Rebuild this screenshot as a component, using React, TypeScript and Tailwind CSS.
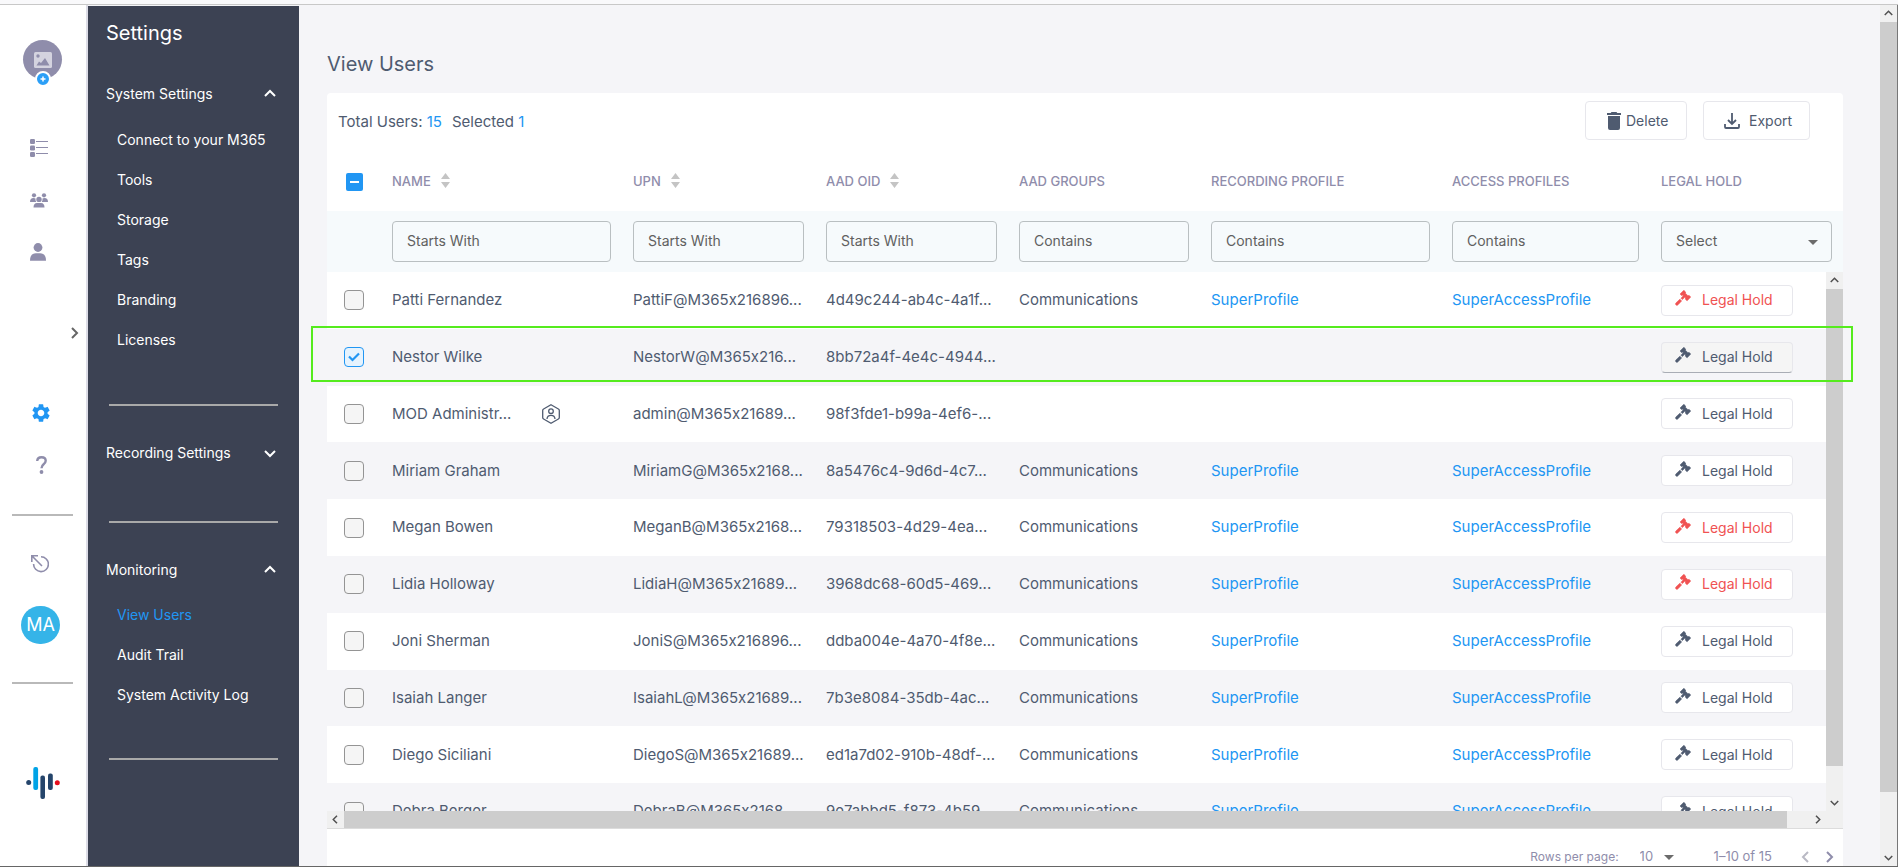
import { useState } from "react";
import { clsx } from "clsx";
import { MdSettings } from "react-icons/md";

type User = {
    name: string;
    upn: string;
    oid: string;
    group?: boolean;
    hold?: boolean;
    admin?: boolean;
};

const users: User[] = [
    { name: "Patti Fernandez", upn: "PattiF@M365x216896...", oid: "4d49c244-ab4c-4a1f...", group: true, hold: true },
    { name: "Nestor Wilke", upn: "NestorW@M365x216...", oid: "8bb72a4f-4e4c-4944..." },
    { name: "MOD Administr...", upn: "admin@M365x21689...", oid: "98f3fde1-b99a-4ef6-...", admin: true },
    { name: "Miriam Graham", upn: "MiriamG@M365x2168...", oid: "8a5476c4-9d6d-4c7...", group: true },
    { name: "Megan Bowen", upn: "MeganB@M365x2168...", oid: "79318503-4d29-4ea...", group: true, hold: true },
    { name: "Lidia Holloway", upn: "LidiaH@M365x21689...", oid: "3968dc68-60d5-469...", group: true, hold: true },
    { name: "Joni Sherman", upn: "JoniS@M365x216896...", oid: "ddba004e-4a70-4f8e...", group: true },
    { name: "Isaiah Langer", upn: "IsaiahL@M365x21689...", oid: "7b3e8084-35db-4ac...", group: true },
    { name: "Diego Siciliani", upn: "DiegoS@M365x21689...", oid: "ed1a7d02-910b-48df-...", group: true },
    { name: "Debra Berger", upn: "DebraB@M365x2168...", oid: "9e7abbd5-f873-4b59...", group: true },
];

const columns = [
    { title: "NAME", filter: "Starts With", sort: true },
    { title: "UPN", filter: "Starts With", sort: true },
    { title: "AAD OID", filter: "Starts With", sort: true },
    { title: "AAD GROUPS", filter: "Contains" },
    { title: "RECORDING PROFILE", filter: "Contains" },
    { title: "ACCESS PROFILES", filter: "Contains" },
];

const systemLinks = ["Connect to your M365", "Tools", "Storage", "Tags", "Branding", "Licenses"];
const monitoringLinks = ["View Users", "Audit Trail", "System Activity Log"];

// shared by the head table and the body table
const Cols = () => (
    <colgroup>
        <col className="w-[54px]" />
        <col className="w-[241px]" />
        <col className="w-[193px]" />
        <col className="w-[193px]" />
        <col className="w-[192px]" />
        <col className="w-[241px]" />
        <col className="w-[209px]" />
        <col className="w-[193px]" />
    </colgroup>
);

const arrows = {
    up: "M1 8 L6 3 L11 8",
    down: "M1 4 L6 9 L11 4",
    left: "M8 1 L3 6 L8 11",
    right: "M4 1 L9 6 L4 11",
};

const Arrow = ({ dir, className }: { dir: keyof typeof arrows; className?: string }) => (
    <svg className={className} viewBox="0 0 12 12" fill="none" stroke="currentColor" strokeWidth="2">
        <path d={arrows[dir]} />
    </svg>
);

const Caret = ({ className }: { className?: string }) => (
    <svg className={className} viewBox="0 0 10 5" fill="currentColor">
        <path d="M0 0h10L5 5z" />
    </svg>
);

const Sort = () => (
    <svg className="-mt-1 h-[15px] w-[9px]" viewBox="0 0 9 15" fill="#c4c4c4">
        <path d="M4.500 0 L9 6 H0Z M4.500 15 L9 9 H0Z" />
    </svg>
);

const Gavel = () => (
    <svg className="-mt-1 h-4 w-4" viewBox="0 0 16 16" fill="currentColor" stroke="currentColor" strokeWidth="0.600">
        <path d="M8.800 0.300 L10.600 2 L10.400 3.300 L12.900 5.700 L14.200 5.400 L15.700 7.100 L12.100 10.800 L10.400 9.200 L10.600 8 L9.800 7.300 L7.300 9.600 L6 8.200 L8.300 5.800 L7.600 5.200 L6.500 5.500 L5.100 4Z" />
        <path d="M4.900 9.200 L6.600 10.900 L3 14.800 Q2 15.700 1 15 Q0.200 14.200 0.900 13Z" />
    </svg>
);

const AdminBadge = () => (
    <svg className="h-5 w-[18px] shrink-0" viewBox="0 0 18 20" fill="none" stroke="#4f5b70" strokeWidth="1.300">
        <path d="M9 0.800 L16.400 5 Q17.300 5.500 17.300 6.500 V13.500 Q17.300 14.500 16.400 15 L9 19.200 L1.600 15 Q0.700 14.500 0.700 13.500 V6.500 Q0.700 5.500 1.600 5Z" />
        <circle cx="9" cy="7.200" r="2.300" />
        <path d="M5 15 Q5.200 11.300 9 11.300 Q12.800 11.300 13 15" />
    </svg>
);

const Rail = () => (
    <nav className="flex w-[88px] shrink-0 flex-col border-r-2 border-[#dcdce6] bg-white text-[#8f8dab]">
        <a href="#" aria-label="Picture" className="relative ml-[23px] mt-[35px] flex h-[39px] w-[39px] shrink-0 items-center justify-center rounded-full bg-[#8f8dab]">
            <svg className="h-4 w-[18px]" viewBox="0 0 18 16">
                <rect width="18" height="16" rx="1.500" fill="#d4d3df" />
                <circle cx="4" cy="4" r="1.700" fill="#8f8dab" />
                <path d="M2.500 13.500 L5 9.500 L7 11 L11 6 L15.500 13.500z" fill="#8f8dab" />
            </svg>
            <span className="absolute -bottom-2 left-3 flex h-4 w-4 items-center justify-center rounded-full border-2 border-white bg-[#2b9ff7]">
                <svg className="h-2 w-2" viewBox="0 0 8 8" stroke="#fff" strokeWidth="1.500">
                    <path d="M4 1.500v5M1.500 4h5" />
                </svg>
            </span>
        </a>
        <a href="#" aria-label="List" className="ml-[30px] mt-[60px]">
            <svg className="h-[18px] w-[18px]" viewBox="0 0 18 18" fill="currentColor">
                <rect width="5" height="5" rx="1.200" />
                <rect y="6.500" width="5" height="5" rx="1.200" />
                <rect y="13" width="5" height="5" rx="1.200" />
                <rect x="6" y="2" width="12" height="1" />
                <rect x="6" y="8" width="12" height="1" />
                <rect x="6" y="14" width="12" height="1" />
            </svg>
        </a>
        <a href="#" aria-label="Groups" className="ml-[30px] mt-9">
            <svg className="h-[15px] w-[18px]" viewBox="0 0 18 15" fill="currentColor">
                <circle cx="4" cy="2.300" r="2.100" />
                <circle cx="14" cy="2.300" r="2.100" />
                <circle cx="9" cy="6.400" r="2.700" />
                <path d="M0 9 Q0 5 3.500 5 Q5 5 5.500 5.600 Q5.200 7.500 6.200 9Z" />
                <path d="M18 9 Q18 5 14.500 5 Q13 5 12.500 5.600 Q12.800 7.500 11.800 9Z" />
                <path d="M3.500 14.500 Q3.500 10 7 10 H11 Q14.500 10 14.500 14.500Z" />
            </svg>
        </a>
        <a href="#" aria-label="User" className="ml-[30px] mt-[35px]">
            <svg className="h-[18px] w-4" viewBox="0 0 16 18" fill="currentColor">
                <circle cx="8" cy="4.500" r="4.400" />
                <path d="M0 17.700 Q0 10.300 6 10.300 H10 Q16 10.300 16 17.700Z" />
            </svg>
        </a>
        <button aria-label="Expand" className="ml-[68px] mt-[66px] h-3 w-3 text-[#666]">
            <Arrow dir="right" className="h-3 w-3" />
        </button>
        <a href="#" aria-label="Settings" className="ml-[30px] mt-[63px] text-[#2196f3]">
            <MdSettings className="h-[22px] w-[22px]" />
        </a>
        <a href="#" aria-label="Help" className="ml-9 mt-8">
            <svg className="h-[18px] w-[11px]" viewBox="0 0 11 18" fill="none" stroke="currentColor" strokeWidth="2.400">
                <path d="M1.200 5 Q1.400 1.200 5.500 1.200 Q9.700 1.200 9.700 4.700 Q9.700 6.600 7.600 8.200 Q5.500 9.800 5.500 12.300" />
                <circle cx="5.500" cy="16" r="1.900" fill="currentColor" stroke="none" />
            </svg>
        </a>
        <hr className="ml-3 mt-10 w-[61px] border-t-2 border-[#b9b9b9]" />
        <a href="#" aria-label="Sign out" className="ml-[31px] mt-[39px]">
            <svg className="h-[18px] w-[18px]" viewBox="0 0 18 18" fill="none" stroke="currentColor" strokeWidth="1.600">
                <path d="M7 0.800 H0.800 V7 M0.800 0.800 L11 11" />
                <path d="M10 1.800 A7.400 7.400 0 1 1 2.600 9" />
            </svg>
        </a>
        <a href="#" className="ml-[21px] mt-[33px] flex h-[38px] w-[39px] shrink-0 items-center justify-center rounded-full bg-[#35b4e8] text-lg text-white">
            MA
        </a>
        <hr className="ml-3 mt-[38px] w-[61px] border-t-2 border-[#b9b9b9]" />
        <svg className="ml-[26px] mt-[83px] h-8 w-[34px] shrink-0" viewBox="0 0 34 32">
            <circle cx="2.700" cy="15.500" r="2.500" fill="#25456b" />
            <rect x="7.300" width="4.800" height="23" rx="2" fill="#00a3e6" />
            <rect x="14.400" y="8.500" width="4.600" height="23.500" rx="2" fill="#25456b" />
            <rect x="22" y="6.500" width="4.800" height="16.500" rx="2" fill="#25456b" />
            <circle cx="31.300" cy="15.800" r="2.500" fill="#e60f1e" />
        </svg>
    </nav>
);

const SectionTitle = ({ title, open }: { title: string; open?: boolean }) => (
    <button className="flex h-10 w-full items-center justify-between pr-[23px] text-left">
        {title}
        <Arrow dir={open ? "up" : "down"} className="h-3 w-3" />
    </button>
);

const Sidebar = () => (
    <aside className="mt-px w-[211px] shrink-0 bg-[#3c4253] pl-[18px] text-sm text-white">
        <h1 className="pb-[27px] pt-[13px] text-xl">Settings</h1>
        <SectionTitle title="System Settings" open />
        <ul className="pl-[11px] pt-[6px]">
            {systemLinks.map((link) => (
                <li key={link} className="flex h-10 items-center">
                    <a href="#">{link}</a>
                </li>
            ))}
        </ul>
        <hr className="ml-[3px] mr-[21px] mt-11 border-t-2 border-[#a9a9a9]" />
        <div className="pt-[27px]">
            <SectionTitle title="Recording Settings" />
        </div>
        <hr className="ml-[3px] mr-[21px] mt-12 border-t-2 border-[#a9a9a9]" />
        <div className="pt-[27px]">
            <SectionTitle title="Monitoring" open />
        </div>
        <ul className="pl-[11px] pt-[5px]">
            {monitoringLinks.map((link) => (
                <li key={link} className="flex h-10 items-center">
                    <a href="#" className={clsx(link === "View Users" && "text-[#2196f3]")}>{link}</a>
                </li>
            ))}
        </ul>
        <hr className="ml-[3px] mr-[21px] mt-[43px] border-t-2 border-[#a9a9a9]" />
    </aside>
);

const App = () => {
    const [selected, setSelected] = useState<number[]>([1]);
    const toggle = (i: number) => setSelected((s) => (s.includes(i) ? s.filter((n) => n !== i) : [...s, i]));

    return (
        <div className="flex h-screen flex-col overflow-hidden border-b border-[#666] bg-[#f5f5f8] font-['Inter',sans-serif] text-[15px] text-[#4f5b70] [font-feature-settings:'calt'_0]">
            <div className="h-[5px] shrink-0 border-b border-[#c8c8c8] bg-[#f9f9fb]"></div>
            <div className="flex min-h-0 flex-1 overflow-hidden">
                <Rail />
                <Sidebar />
                <main className="min-w-0 flex-1 pl-7 pr-[37px] pt-[45px]">
                    <h2 className="text-xl">View Users</h2>
                    <div className="mt-[15px] rounded-t bg-white">
                        {/* toolbar */}
                        <div className="flex h-[60px] items-start justify-between pl-[11px] pr-[33px] pt-2">
                            <p className="flex h-[42px] items-center gap-[10px]">
                                <span>Total Users: <span className="text-[#2196f3]">15</span></span>
                                <span>Selected <span className="text-[#2196f3]">1</span></span>
                            </p>
                            <div className="flex gap-4 text-sm">
                                <button className="flex h-[39px] w-[102px] items-center gap-[5px] rounded border border-[#e7e7ec] pl-[21px]">
                                    <svg className="h-[18px] w-[14px]" viewBox="0 0 14 18" fill="currentColor">
                                        <path d="M4.500 0h5l0.800 1H14v2H0V1h3.700zM1 4h12v12q0 2-2 2H3q-2 0-2-2z" />
                                    </svg>
                                    Delete
                                </button>
                                <button className="flex h-[39px] w-[107px] items-center gap-[9px] rounded border border-[#e7e7ec] pl-5">
                                    <svg className="h-4 w-4" viewBox="0 0 16 16" fill="none" stroke="currentColor" strokeWidth="1.800">
                                        <path d="M8 0v10.500M4 7l4 4 4-4M1 11v3q0 1 1 1h12q1 0 1-1v-3" />
                                    </svg>
                                    Export
                                </button>
                            </div>
                        </div>

                        {/* head and filters */}
                        <table className="w-full table-fixed">
                            <Cols />
                            <thead>
                                <tr className="h-[58px] text-left text-[13px] text-[#8f8dab]">
                                    <th className="pl-[19px]">
                                        <button aria-label="Select all" className="flex h-[18px] w-[17px] items-center justify-center rounded-xs bg-[#2196f3]">
                                            <span className="h-[2px] w-[9px] bg-white"></span>
                                        </button>
                                    </th>
                                    {columns.map((c) => (
                                        <th key={c.title} className="pl-[11px] font-medium">
                                            <span className="flex items-center gap-[10px]">
                                                {c.title}
                                                {c.sort && <Sort />}
                                            </span>
                                        </th>
                                    ))}
                                    <th className="pl-[11px] font-medium">LEGAL HOLD</th>
                                </tr>
                                <tr className="h-[61px] bg-[#f6fafc]">
                                    <td></td>
                                    {columns.map((c) => (
                                        <td key={c.title} className="px-[11px]">
                                            <input
                                                type="text"
                                                aria-label={c.title}
                                                placeholder={c.filter}
                                                className="block h-[41px] w-full rounded border border-[#b9bfc1] px-[14px] pb-[2px] text-sm placeholder:text-[#606060]"
                                            />
                                        </td>
                                    ))}
                                    <td className="px-[11px]">
                                        <div className="relative">
                                            <select aria-label="LEGAL HOLD" className="block h-[41px] w-full appearance-none rounded border border-[#b9bfc1] px-[14px] pb-[2px] text-sm text-[#606060]">
                                                <option>Select</option>
                                            </select>
                                            <Caret className="pointer-events-none absolute right-[14px] top-[19px] h-[5px] w-[10px] text-[#6b6b6b]" />
                                        </div>
                                    </td>
                                </tr>
                            </thead>
                        </table>

                        {/* rows */}
                        <div className="relative">
                            <div className="flex h-[539px]">
                                <div className="min-w-0 flex-1 overflow-hidden">
                                    <table className="h-[568px] w-[calc(100%+17px)] table-fixed">
                                        <Cols />
                                        <tbody>
                                            {users.map((u, i) => (
                                                <tr key={u.name} className="even:bg-[#f5f5f8]">
                                                    <td className="pl-[17px]">
                                                        <span className="relative block h-5 w-5">
                                                            <input
                                                                type="checkbox"
                                                                aria-label={u.name}
                                                                checked={selected.includes(i)}
                                                                onChange={() => toggle(i)}
                                                                className="block h-5 w-5 appearance-none rounded border border-[#949494] bg-[#f5f5f5] checked:border-[#2196f3] checked:bg-[#e6f3fe]"
                                                            />
                                                            {selected.includes(i) && (
                                                                <svg className="pointer-events-none absolute left-1 top-1 h-3 w-3" viewBox="0 0 12 12" fill="none" stroke="#2196f3" strokeWidth="2.200">
                                                                    <path d="M1 5.500 L4.500 9 L11 2.500" />
                                                                </svg>
                                                            )}
                                                        </span>
                                                    </td>
                                                    <td className="pl-[11px]">
                                                        <div className="flex items-center gap-3">
                                                            <span className="w-[138px]">{u.name}</span>
                                                            {u.admin && <AdminBadge />}
                                                        </div>
                                                    </td>
                                                    <td className="whitespace-nowrap pl-[11px]">{u.upn}</td>
                                                    <td className="whitespace-nowrap pl-[11px]">{u.oid}</td>
                                                    <td className="pl-[11px]">{u.group && "Communications"}</td>
                                                    <td className="pl-[11px] text-[#2196f3]">{u.group && <a href="#">SuperProfile</a>}</td>
                                                    <td className="pl-[11px] text-[#2196f3]">{u.group && <a href="#">SuperAccessProfile</a>}</td>
                                                    <td className="pl-[11px]">
                                                        <button
                                                            className={clsx(
                                                                "flex h-[31px] w-[132px] items-center gap-[11px] rounded border border-[#e7e7ec] pl-[13px] text-sm",
                                                                u.hold && "text-[#f05252]",
                                                                selected.includes(i) ? "border-b-[#a9adb5] bg-[#f5f5f5]" : "bg-white"
                                                            )}
                                                        >
                                                            <Gavel />
                                                            Legal Hold
                                                        </button>
                                                    </td>
                                                </tr>
                                            ))}
                                        </tbody>
                                    </table>
                                </div>
                                <div className="flex w-[17px] shrink-0 flex-col items-center bg-[#f0f0f0] text-[#505050]">
                                    <Arrow dir="up" className="my-1 h-[9px] w-[9px]" />
                                    <div className="w-full flex-1 bg-[#cdcdcd]"></div>
                                    <Arrow dir="down" className="mb-1 mt-8 h-[9px] w-[9px]" />
                                </div>
                            </div>
                            <div className="flex h-[17px] items-center bg-[#f0f0f0] text-[#505050]">
                                <Arrow dir="left" className="mx-1 h-[9px] w-[9px]" />
                                <div className="h-full flex-1 bg-[#cdcdcd]"></div>
                                <Arrow dir="right" className="ml-[26px] mr-[21px] h-[9px] w-[9px]" />
                            </div>
                            {/* highlight around the chosen row */}
                            <div className="pointer-events-none absolute -left-4 -right-[10px] top-[54px] h-14 border-2 border-[#55eb1e]"></div>
                        </div>

                        {/* paging */}
                        <div className="flex h-14 items-center justify-end border-t border-[#dcdcdc] pr-2 pt-px text-[13px] text-[#8f8dab]">
                            <label htmlFor="rows" className="text-xs">Rows per page:</label>
                            <div className="relative ml-[21px] mr-10">
                                <select id="rows" className="block w-[34px] appearance-none">
                                    <option>10</option>
                                </select>
                                <Caret className="pointer-events-none absolute right-0 top-2 h-[5px] w-[10px] text-[#6b6b6b]" />
                            </div>
                            <span>1–10 of 15</span>
                            <button aria-label="Previous page" className="ml-7 text-[#b9b9c4]"><Arrow dir="left" className="h-3 w-3" /></button>
                            <button aria-label="Next page" className="ml-[11px]"><Arrow dir="right" className="h-3 w-3" /></button>
                        </div>
                    </div>
                </main>
                <div className="flex w-[18px] shrink-0 flex-col items-center border-r border-[#777] bg-[#f0f0f0] text-[#505050]">
                    <Arrow dir="up" className="my-1 h-[9px] w-[9px]" />
                    <div className="w-full flex-1 bg-[#cdcdcd]"></div>
                    <Arrow dir="down" className="mb-1 mt-[61px] h-[9px] w-[9px]" />
                </div>
            </div>
        </div>
    );
};

export default App;
